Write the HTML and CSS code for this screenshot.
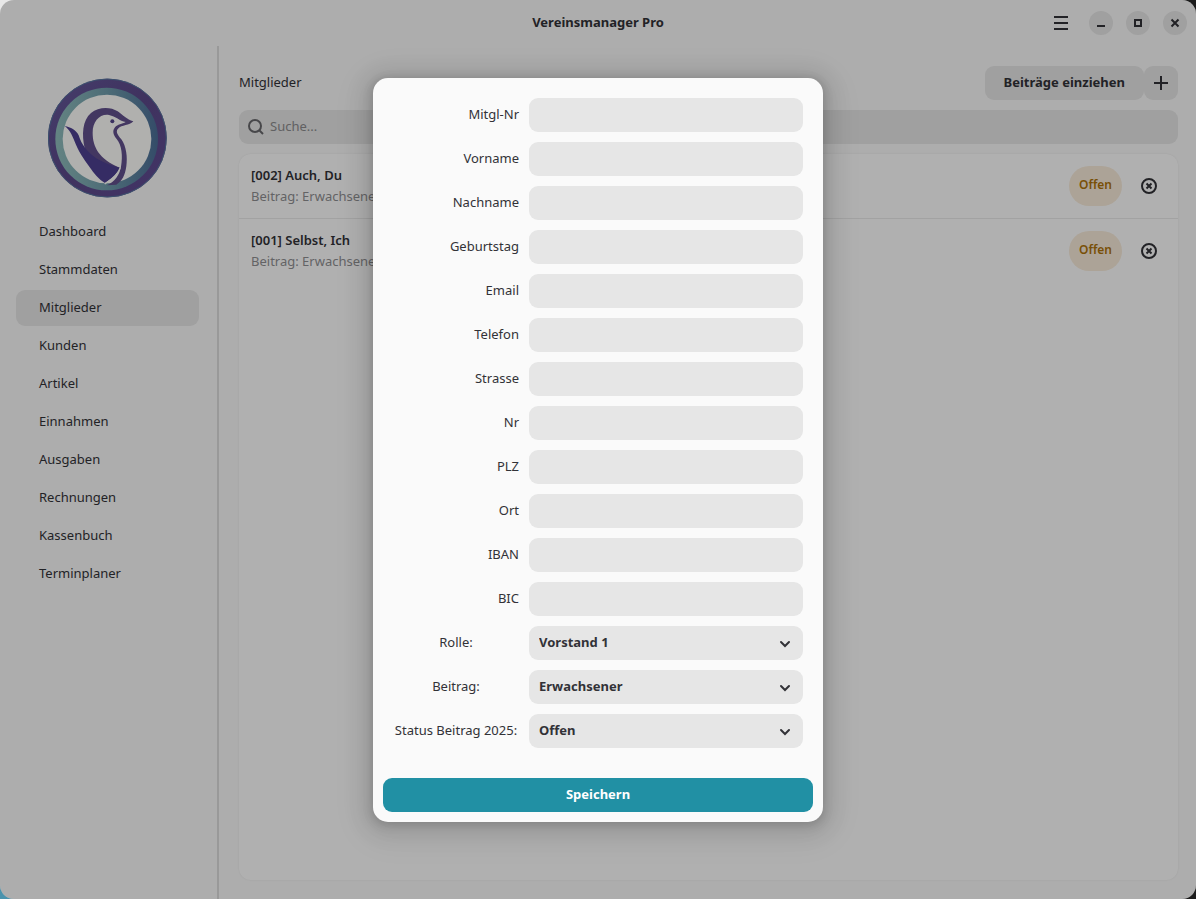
FILE: index.html
```html
<!DOCTYPE html>
<html lang="de">
<head>
    <meta charset="utf-8">
    <title>Vereinsmanager Pro</title>
    <link rel="stylesheet" href="styles.css">
</head>
<body>
    <div class="window">
        <header class="titlebar">
            <h1>Vereinsmanager Pro</h1>
            <div class="window-controls">
                <button class="menu-button" aria-label="Menü">
                    <svg width="16" height="16" viewBox="0 0 16 16"><path d="M1 2h14M1 8h14M1 14h14" stroke="currentColor" stroke-width="2"/></svg>
                </button>
                <button class="round-button" aria-label="Minimieren">
                    <svg width="16" height="16" viewBox="0 0 16 16"><path d="M4 11h8" stroke="currentColor" stroke-width="2"/></svg>
                </button>
                <button class="round-button" aria-label="Maximieren">
                    <svg width="16" height="16" viewBox="0 0 16 16"><rect x="5" y="5" width="6" height="6" fill="none" stroke="currentColor" stroke-width="2"/></svg>
                </button>
                <button class="round-button" aria-label="Schließen">
                    <svg width="16" height="16" viewBox="0 0 16 16"><path d="M4.500 4.500l7 7M11.500 4.500l-7 7" stroke="currentColor" stroke-width="2"/></svg>
                </button>
            </div>
        </header>

        <div class="content">
            <aside class="sidebar">
                <svg class="logo" viewBox="53 39 360 360">
                    <defs>
                        <linearGradient id="outer" x1="0" y1="0" x2="1" y2="1">
                            <stop offset="0" stop-color="#63589a"/>
                            <stop offset="0.5" stop-color="#5b4888"/>
                            <stop offset="1" stop-color="#5f4c94"/>
                        </linearGradient>
                        <linearGradient id="inner" x1="0" y1="0" x2="1" y2="0">
                            <stop offset="0" stop-color="#8fbcbb"/>
                            <stop offset="0.5" stop-color="#6f9cab"/>
                            <stop offset="1" stop-color="#4b6d96"/>
                        </linearGradient>
                    </defs>
                    <circle cx="231" cy="219" r="178" fill="url(#outer)"/>
                    <circle cx="231" cy="219" r="177" fill="none" stroke="#56769e" stroke-width="3"/>
                    <circle cx="229" cy="222" r="154" fill="url(#inner)"/>
                    <circle cx="230" cy="222" r="133" fill="#fdfdfa"/>
                    <path d="M163 250C154 208 156 166 182 144C204 125 240 124 262 139C279 151 289 163 309 169C297 182 275 179 263 191C255 199 262 210 273 223C288 244 292 276 288 304C284 331 276 348 258 359L230 361C254 348 267 331 272 305C278 272 274 240 259 222C249 210 245 198 254 187C261 178 276 177 286 171C268 168 256 154 236 150C208 146 187 170 187 203C187 245 205 281 268 308L236 322C202 308 179 284 163 250Z" fill="#604f8c"/>
                    <path d="M103 183C121 187 137 194 145 211C153 238 172 264 200 281C221 293 244 302 269 308C260 329 242 341 224 354C206 343 190 324 177 305C158 278 148 264 137 239C127 215 121 197 103 183Z" fill="#4c3f90"/>
                    <path d="M223 357C238 347 263 331 270 307" fill="none" stroke="#fdfdfa" stroke-width="4"/>
                    <circle cx="246" cy="169" r="6" fill="#54478a"/>
                </svg>
                <nav>
                    <a href="#">Dashboard</a>
                    <a href="#">Stammdaten</a>
                    <a href="#" class="active">Mitglieder</a>
                    <a href="#">Kunden</a>
                    <a href="#">Artikel</a>
                    <a href="#">Einnahmen</a>
                    <a href="#">Ausgaben</a>
                    <a href="#">Rechnungen</a>
                    <a href="#">Kassenbuch</a>
                    <a href="#">Terminplaner</a>
                </nav>
            </aside>

            <main>
                <div class="toolbar">
                    <h2>Mitglieder</h2>
                    <button class="tool-button">Beiträge einziehen</button>
                    <button class="tool-button add-button" aria-label="Hinzufügen">
                        <svg width="16" height="16" viewBox="0 0 16 16"><path d="M1 8h14M8 1v14" stroke="currentColor" stroke-width="2"/></svg>
                    </button>
                </div>
                <div class="search">
                    <svg width="16" height="16" viewBox="0 0 16 16" fill="none" stroke="currentColor" stroke-width="2"><circle cx="7" cy="7" r="6"/><path d="M11 11l4 4"/></svg>
                    <input type="text" placeholder="Suche..." aria-label="Suche">
                </div>
                <ul class="members">
                    <li>
                        <div class="member">
                            <strong>[002] Auch, Du</strong>
                            <span>Beitrag: Erwachsener</span>
                        </div>
                        <span class="badge">Offen</span>
                        <button class="delete-button" aria-label="Löschen">
                            <svg width="16" height="16" viewBox="0 0 16 16" fill="none" stroke="currentColor" stroke-width="2"><circle cx="8" cy="8" r="7"/><path d="M5.500 5.500l5 5M10.500 5.500l-5 5"/></svg>
                        </button>
                    </li>
                    <li>
                        <div class="member">
                            <strong>[001] Selbst, Ich</strong>
                            <span>Beitrag: Erwachsener</span>
                        </div>
                        <span class="badge">Offen</span>
                        <button class="delete-button" aria-label="Löschen">
                            <svg width="16" height="16" viewBox="0 0 16 16" fill="none" stroke="currentColor" stroke-width="2"><circle cx="8" cy="8" r="7"/><path d="M5.500 5.500l5 5M10.500 5.500l-5 5"/></svg>
                        </button>
                    </li>
                </ul>
            </main>
        </div>

        <div class="overlay">
            <form class="dialog" role="dialog" aria-label="Mitglied">
                <div class="fields">
                    <label for="mitgl-nr">Mitgl-Nr</label>
                    <input type="text" id="mitgl-nr">
                    <label for="vorname">Vorname</label>
                    <input type="text" id="vorname">
                    <label for="nachname">Nachname</label>
                    <input type="text" id="nachname">
                    <label for="geburtstag">Geburtstag</label>
                    <input type="text" id="geburtstag">
                    <label for="email">Email</label>
                    <input type="text" id="email">
                    <label for="telefon">Telefon</label>
                    <input type="text" id="telefon">
                    <label for="strasse">Strasse</label>
                    <input type="text" id="strasse">
                    <label for="nr">Nr</label>
                    <input type="text" id="nr">
                    <label for="plz">PLZ</label>
                    <input type="text" id="plz">
                    <label for="ort">Ort</label>
                    <input type="text" id="ort">
                    <label for="iban">IBAN</label>
                    <input type="text" id="iban">
                    <label for="bic">BIC</label>
                    <input type="text" id="bic">

                    <label for="rolle" class="center">Rolle:</label>
                    <div class="select">
                        <select id="rolle">
                            <option>Vorstand 1</option>
                        </select>
                        <svg width="16" height="16" viewBox="0 0 16 16"><path d="M4 6l4 4l4-4" fill="none" stroke="currentColor" stroke-width="2" stroke-linecap="round"/></svg>
                    </div>
                    <label for="beitrag" class="center">Beitrag:</label>
                    <div class="select">
                        <select id="beitrag">
                            <option>Erwachsener</option>
                        </select>
                        <svg width="16" height="16" viewBox="0 0 16 16"><path d="M4 6l4 4l4-4" fill="none" stroke="currentColor" stroke-width="2" stroke-linecap="round"/></svg>
                    </div>
                    <label for="status" class="center">Status Beitrag 2025:</label>
                    <div class="select">
                        <select id="status">
                            <option>Offen</option>
                        </select>
                        <svg width="16" height="16" viewBox="0 0 16 16"><path d="M4 6l4 4l4-4" fill="none" stroke="currentColor" stroke-width="2" stroke-linecap="round"/></svg>
                    </div>
                </div>
                <button type="submit" class="save-button">Speichern</button>
            </form>
        </div>
    </div>
</body>
</html>
```
FILE: styles.css
```css
* {
    box-sizing: border-box;
}
body {
    margin: 0;
    font-family: "Noto Sans", sans-serif;
    font-size: 13px;
    line-height: 20px;
    color: #323237;
    /* desktop behind the rounded corners */
    background:
        linear-gradient(#e8e8e8, #e8e8e8) top left / 20px 20px no-repeat,
        linear-gradient(#4a93ad, #4a93ad) bottom left / 20px 20px no-repeat,
        #1c1c1c;
}
button, input, select {
    font: inherit;
    color: inherit;
    border: none;
}
button {
    padding: 0;
    font-weight: bold;
}
svg {
    display: block;
}
.window {
    position: relative;
    display: flex;
    flex-direction: column;
    min-height: 100vh;
    background-color: #f8f8f8;
    border-radius: 14px;
    overflow: hidden;
}

/* title bar */
.titlebar {
    display: grid;
    grid-template-columns: 1fr auto 1fr;
    align-items: center;
    height: 46px;
    padding: 0 9px;
}
.titlebar h1 {
    grid-column: 2;
    margin: 0;
    padding-bottom: 2px;
    font-size: 13px;
}
.window-controls {
    display: flex;
    justify-content: flex-end;
    align-items: center;
    gap: 13px;
}
.menu-button {
    margin-right: 7px;
    background: none;
}
.round-button {
    display: grid;
    place-items: center;
    width: 24px;
    height: 24px;
    border-radius: 50%;
    background-color: #e5e5e5;
}

/* sidebar */
.content {
    display: flex;
    flex: 1;
}
.sidebar {
    width: 219px;
    padding: 32px 18px 0 16px;
    border-right: 2px solid #dcdcdc;
}
.logo {
    width: 120px;
    height: 120px;
    margin: 0 auto 16px;
}
nav {
    display: flex;
    flex-direction: column;
    gap: 2px;
}
nav a {
    padding: 7px 23px 9px;
    border-radius: 9px;
    color: inherit;
    text-decoration: none;
}
nav a.active {
    background-color: #e5e5e5;
}

/* member list */
main {
    display: flex;
    flex: 1;
    flex-direction: column;
    gap: 10px;
    padding: 20px 18px 19px 20px;
}
.toolbar {
    display: flex;
    align-items: center;
}
.toolbar h2 {
    flex: 1;
    margin: 0;
    padding-bottom: 2px;
    font-size: 13px;
    font-weight: normal;
}
.tool-button {
    height: 34px;
    padding: 0 19px 2px;
    border-radius: 9px;
    background-color: #e5e5e5;
}
.add-button {
    padding: 0 9px;
}
.search {
    display: flex;
    align-items: center;
    gap: 6px;
    height: 34px;
    padding: 0 9px;
    border-radius: 9px;
    background-color: #e5e5e5;
    color: #66666a;
}
.search input {
    flex: 1;
    padding: 0 0 2px;
    background: none;
}
.search input::placeholder {
    color: #8b8b8d;
}
.members {
    flex: 1;
    margin: 0;
    padding: 0;
    list-style: none;
    background-color: #fdfdfd;
    border-radius: 12px;
    box-shadow: 0 0 2px rgba(0, 0, 0, 0.08);
}
.members li {
    display: flex;
    align-items: center;
    height: 65px;
    padding: 0 12px;
    border-bottom: 1px solid #e8e8e8;
}
.members li:last-child {
    border-bottom-color: transparent;
}
.member {
    display: flex;
    flex: 1;
    flex-direction: column;
    gap: 1px;
    padding-bottom: 2px;
}
.member strong {
    font-weight: 600;
}
.member span {
    color: #8f8f91;
}
.badge {
    padding: 9px 10px 11px;
    border-radius: 20px;
    background-color: #f6ead9;
    color: #ae730a;
    font-size: 12px;
    font-weight: 600;
}
.delete-button {
    margin: 0 9px 0 19px;
    background: none;
}

/* dialog */
.overlay {
    position: absolute;
    inset: 0;
    display: flex;
    justify-content: center;
    align-items: center;
    padding-top: 1px;
    background-color: rgba(0, 0, 0, 0.3);
}
.dialog {
    width: 450px;
    padding: 20px 10px 10px;
    background-color: #fafafa;
    border-radius: 15px;
    box-shadow: 0 2px 8px 2px rgba(0, 0, 0, 0.13), 0 3px 20px 10px rgba(0, 0, 0, 0.09), 0 6px 32px 16px rgba(0, 0, 0, 0.04);
}
.fields {
    display: grid;
    grid-template-columns: 126px 1fr;
    gap: 10px;
    padding: 0 10px;
}
.fields label {
    padding: 6px 0 8px;
    text-align: right;
}
.fields label.center {
    text-align: center;
}
.fields input, .fields select {
    width: 100%;
    height: 34px;
    padding: 0 10px 2px;
    border-radius: 9px;
    background-color: #e6e6e6;
}
.select {
    position: relative;
}
.select select {
    appearance: none;
    font-weight: bold;
}
.select svg {
    position: absolute;
    top: 10px;
    right: 10px;
    pointer-events: none;
}
.save-button {
    width: 100%;
    height: 34px;
    margin-top: 30px;
    padding-bottom: 2px;
    border-radius: 9px;
    background-color: #2190a4;
    color: #ffffff;
}
```
